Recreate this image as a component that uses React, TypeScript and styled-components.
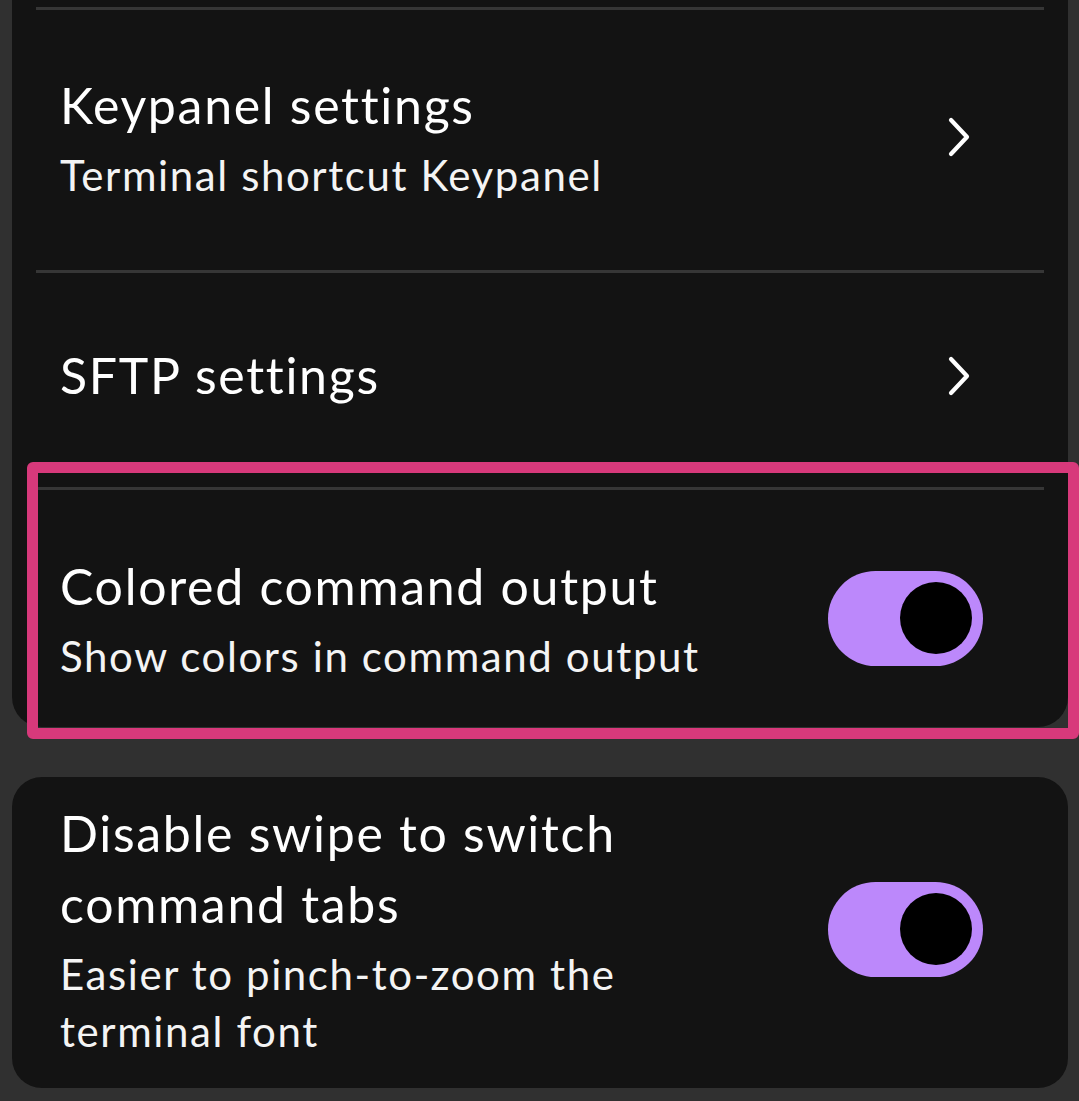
import React from "react";
import styled, { createGlobalStyle } from "styled-components";

const Global = createGlobalStyle`
  html, body { margin: 0; padding: 0; background: #303030; overflow: hidden; }
  body { font-family: Lato, "Open Sans", "Noto Sans", sans-serif; -webkit-font-smoothing: antialiased; }
`;

const Page = styled.div`
  width: 1079px;
  height: 1101px;
  box-sizing: border-box;
  padding: 0 11px 0 12px;
  display: flex;
  flex-direction: column;
  gap: 50px;
  background: #303030;
`;

const Card = styled.section<{ $cutTop?: boolean }>`
  background: #131313;
  border-radius: ${(p) => (p.$cutTop ? "0 0 30px 30px" : "30px")};
  padding-top: ${(p) => (p.$cutTop ? "7px" : "0")};
  display: flex;
  flex-direction: column;
`;

const Divider = styled.div`
  height: 3px;
  margin: 0 24px;
  background: #363636;
`;

const Row = styled.div<{ $pt: number; $pb: number }>`
  position: relative;
  display: flex;
  align-items: center;
  gap: 24px;
  padding: ${(p) => `${p.$pt}px 85px ${p.$pb}px 48px`};
`;

const Texts = styled.div`
  flex: 1;
  min-width: 0;
  display: flex;
  flex-direction: column;
`;

const Title = styled.div`
  color: #ffffff;
  font-size: 50px;
  line-height: 71px;
  font-weight: 400;
  letter-spacing: 1.7px;
`;

const Subtitle = styled.div`
  color: #f4f4f4;
  font-size: 42px;
  line-height: 57px;
  margin-top: 6px;
  font-weight: 400;
  letter-spacing: 1.6px;
`;

const ChevronBox = styled.div`
  width: 24px;
  height: 40px;
  margin-right: 12px;
  display: flex;
  align-items: center;
  justify-content: center;
`;

const Track = styled.div`
  width: 155px;
  height: 95px;
  border-radius: 48px;
  background: #bc88fb;
  display: flex;
  align-items: center;
  justify-content: flex-end;
  padding-right: 11px;
  box-sizing: border-box;
  flex-shrink: 0;
`;

const Thumb = styled.div`
  width: 72px;
  height: 72px;
  border-radius: 50%;
  background: #000;
`;

const Highlight = styled.div`
  position: absolute;
  left: 15px;
  top: -28px;
  right: -11px;
  bottom: -12px;
  border: 11px solid #d8397b;
  border-radius: 6px;
  pointer-events: none;
`;

const Chevron = () => (
  <ChevronBox>
    <svg width="24" height="40" viewBox="0 0 24 40" fill="none">
      <polyline
        points="4,3 20,20 4,37"
        stroke="#fff"
        strokeWidth="4.2"
        strokeLinecap="round"
        strokeLinejoin="round"
      />
    </svg>
  </ChevronBox>
);

const Toggle = () => (
  <Track>
    <Thumb />
  </Track>
);

export default function App() {
  return (
    <>
      <Global />
      <Page>
        <Card $cutTop>
          <Divider />
          <Row $pt={60} $pb={66}>
            <Texts>
              <Title>Keypanel settings</Title>
              <Subtitle>Terminal shortcut Keypanel</Subtitle>
            </Texts>
            <Chevron />
          </Row>
          <Divider />
          <Row $pt={67} $pb={76}>
            <Texts>
              <Title>SFTP settings</Title>
            </Texts>
            <Chevron />
          </Row>
          <Divider />
          <Row $pt={61} $pb={42}>
            <Texts>
              <Title>Colored command output</Title>
              <Subtitle>Show colors in command output</Subtitle>
            </Texts>
            <Toggle />
            <Highlight />
          </Row>
        </Card>
        <Card>
          <Row $pt={21} $pb={28}>
            <Texts>
              <Title>
                Disable swipe to switch
                <br />
                command tabs
              </Title>
              <Subtitle>
                Easier to pinch-to-zoom the
                <br />
                terminal font
              </Subtitle>
            </Texts>
            <Toggle />
          </Row>
        </Card>
      </Page>
    </>
  );
}
